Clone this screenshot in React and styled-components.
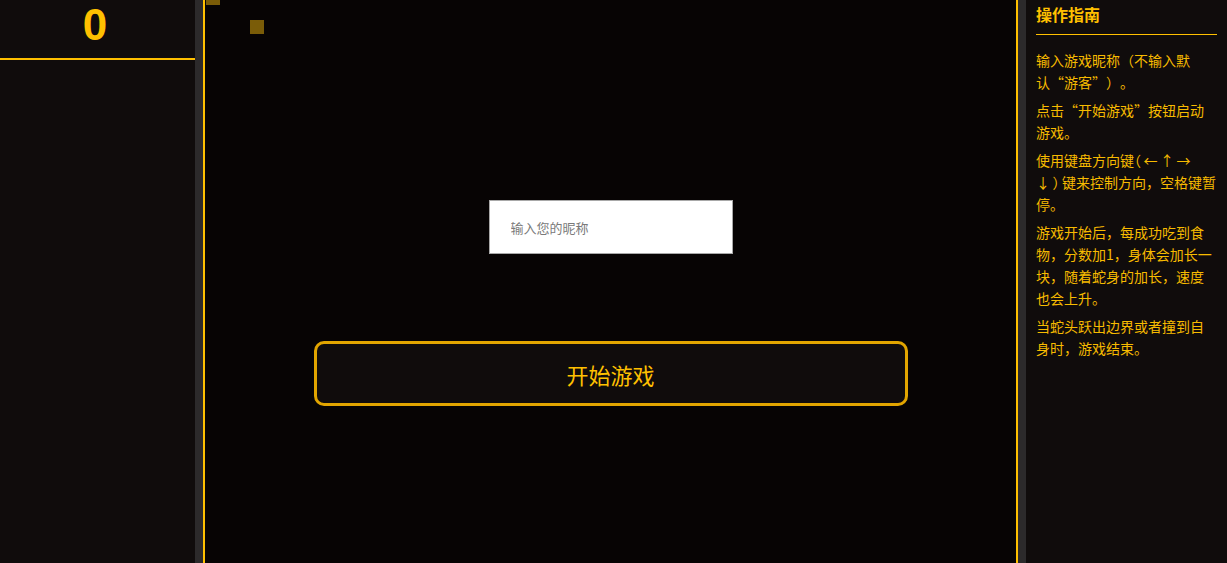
import React, { useState } from 'react';
import styled, { createGlobalStyle } from 'styled-components';

const GlobalStyle = createGlobalStyle`
    html, body {
        margin: 0;
        padding: 0;
        height: 100%;
        background: #070404;
        overflow: hidden;
    }
    #root {
        height: 100%;
    }
`

const yellow = '#ffc000';
const cjk = `"Noto Sans CJK SC", "Noto Sans", sans-serif`;

const Page = styled.div`
    display: flex;
    height: 563px;
    width: 100%;
    font-family: ${cjk};
`

const ScorePanel = styled.div`
    width: 195px;
    flex-shrink: 0;
    background: #100c0c;
    border-right: 8px solid #2c2a2b;
`

const Score = styled.div`
    height: 60px;
    border-bottom: 2px solid ${yellow};
    display: flex;
    align-items: center;
    justify-content: center;
    color: ${yellow};
    font-family: "Liberation Sans", Arial, sans-serif;
    font-weight: bold;
    font-size: 44px;
    padding: 0 5px 8px 0;
    box-sizing: border-box;
`

const Board = styled.div`
    position: relative;
    flex: 1;
    min-width: 0;
    background: #070404;
    border-left: 2px solid ${yellow};
    border-right: 2px solid ${yellow};
    display: flex;
    flex-direction: column;
    align-items: center;
    padding-top: 200px;
    gap: 87px;
    overflow: hidden;
`

const Cell = styled.div`
    position: absolute;
    width: 14px;
    height: 14px;
    background: #7a5c08;
`

const NameInput = styled.input`
    width: 244px;
    height: 54px;
    box-sizing: border-box;
    border: 1px solid #a8a8a8;
    background: #fff;
    padding: 0 21px;
    font-family: ${cjk};
    font-size: 13px;
    color: #333;
    outline: none;

    &::placeholder {
        color: #7a7a7a;
    }
`

const StartButton = styled.button`
    width: 594px;
    height: 65px;
    flex-shrink: 0;
    box-sizing: border-box;
    border: 3px solid #e2a500;
    border-radius: 10px;
    background: #100c0c;
    color: ${yellow};
    font-family: ${cjk};
    font-size: 22px;
    cursor: pointer;
`

const GuidePanel = styled.div`
    width: 209px;
    flex-shrink: 0;
    box-sizing: border-box;
    background: #100c0c;
    border-left: 8px solid #2c2a2b;
    padding: 0 10.5px 0 10px;
`

const GuideTitle = styled.h3`
    margin: 0;
    padding-top: 3px;
    height: 35px;
    box-sizing: border-box;
    border-bottom: 1px solid ${yellow};
    color: ${yellow};
    font-size: 16px;
    font-weight: bold;
    line-height: 22px;
`

const GuideList = styled.div`
    padding-top: 14px;
`

const GuideItem = styled.p`
    margin: 0 0 6px;
    color: #f7bb00;
    font-size: 14px;
    line-height: 22px;
    text-spacing-trim: space-all;
`

// arrow keys: half-width brackets, arrows spread out
const Keys = styled.span`
    font-feature-settings: "halt";
    letter-spacing: 2.5px;
`

const snake = [
    { x: 1, y: -9 },
    { x: 45, y: 20 },
];

const tips = [
    <>输入游戏昵称（不输入默认{'\u2060'}“游客”）。</>,
    <>点击“开始游戏”按钮启动游戏。</>,
    <>使用键盘方向键<Keys>（←↑→{'\u200B'}↓）</Keys>键来控制方向，空格键暂停。</>,
    <>游戏开始后，每成功吃到食物，分数加1，身体会加长一块，随着蛇身的加长，速度也会上升。</>,
    <>当蛇头跃出边界或者撞到自身时，游戏结束。</>,
];

const App = () => {
    const [name, setName] = useState('');
    const [score] = useState(0);

    return (
        <>
        <GlobalStyle/>
        <Page lang='zh-CN'>
            <ScorePanel>
                <Score>{score}</Score>
            </ScorePanel>
            <Board>
                {snake.map((c, i) => (
                    <Cell key={i} style={{ left: c.x, top: c.y }}/>
                ))}
                <NameInput
                    placeholder='输入您的昵称'
                    value={name}
                    onChange={(e) => setName(e.target.value)}
                />
                <StartButton>开始游戏</StartButton>
            </Board>
            <GuidePanel>
                <GuideTitle>操作指南</GuideTitle>
                <GuideList>
                    {tips.map((t, i) => <GuideItem key={i}>{t}</GuideItem>)}
                </GuideList>
            </GuidePanel>
        </Page>
        </>
    );
}

export default App;
